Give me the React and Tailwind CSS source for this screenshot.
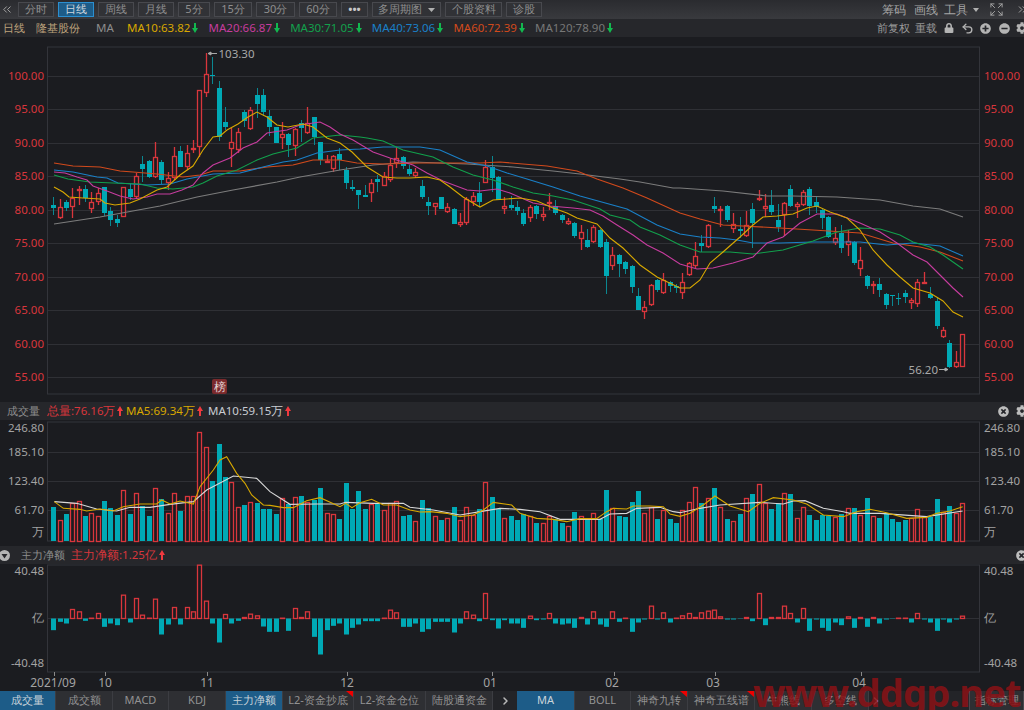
import { ChevronRight, ChevronsLeft, ChevronsRight, Expand, Undo2 } from 'lucide-react'
import { FaCog, FaLock, FaMinusCircle, FaPlusCircle, FaTimesCircle } from 'react-icons/fa'

const UP = '#d9363c'
const DOWN = '#00a9b5'
const GRID = '#2f3035'
const FRAME = '#33343a'
const AXIS = '#a3a3a3'

const barX = (i) => 53.3 + 6.354 * i

// [red?, high, bodyTop, bodyBottom, low] in page pixels, left to right
const candles = [
  [0,197,205,208,215],[1,199,207,218,219],[0,200,202,208,211],[1,188,198,207,218],[1,186,189,190,205],[0,185,189,198,202],
  [1,192,202,209,213],[1,188,193,202,205],[0,187,187,213,216],[0,207,211,220,226],[0,215,219,223,227],[1,187,187,217,217],
  [0,183,189,197,200],[1,173,176,197,198],[0,156,164,169,182],[0,160,161,177,178],[1,142,157,177,178],[0,160,162,180,184],
  [1,172,178,183,190],[1,147,156,178,180],[0,146,151,167,167],[1,145,153,167,170],[1,140,148,150,153],[1,90,90,147,157],
  [1,53,74,93,97],[0,57,75,76,84],[0,81,88,137,141],[0,107,122,127,130],[1,128,142,149,167],[1,128,132,150,153],
  [0,110,112,121,127],[1,107,110,129,130],[0,88,95,104,118],[0,89,95,112,116],[0,110,116,127,136],[0,127,127,143,143],
  [1,122,134,138,149],[0,133,134,145,157],[1,128,129,146,156],[0,120,123,128,142],[1,107,123,133,134],[0,117,117,137,145],
  [0,142,142,160,165],[1,155,161,162,163],[1,155,156,169,172],[0,148,154,160,170],[0,167,170,183,189],[0,180,187,189,191],
  [0,190,190,195,209],[0,185,195,197,197],[1,179,183,193,202],[0,175,179,182,192],[1,172,176,186,186],[1,158,165,180,182],
  [1,147,158,163,168],[0,156,157,166,169],[0,165,169,174,176],[1,168,172,176,178],[0,180,186,197,199],[0,197,202,206,215],
  [1,203,203,207,215],[0,197,197,209,209],[1,203,207,212,213],[0,208,209,224,224],[1,213,222,225,227],[1,197,199,223,225],
  [1,192,196,202,206],[0,182,193,202,207],[1,160,167,183,183],[0,156,167,178,192],[0,176,177,200,200],[1,197,206,209,214],
  [0,196,205,208,210],[0,201,207,211,215],[0,209,213,224,226],[1,205,207,218,222],[0,205,206,214,219],[1,207,214,217,221],
  [1,193,202,204,210],[0,200,206,213,215],[0,214,215,220,223],[1,218,221,224,225],[0,222,223,236,238],[1,225,232,239,250],
  [0,229,240,247,248],[1,225,227,242,243],[0,229,230,247,248],[0,239,242,276,294],[1,247,255,266,270],[0,254,255,264,277],
  [0,261,262,269,274],[0,265,266,287,293],[0,288,296,310,310],[1,301,307,312,319],[1,284,285,305,306],[0,279,280,290,292],
  [1,273,280,293,294],[0,281,282,286,292],[0,284,286,288,293],[1,273,282,293,299],[1,262,263,275,276],[1,242,256,266,268],
  [0,235,243,246,252],[1,224,225,247,248],[0,197,206,209,213],[1,206,209,210,227],[0,205,206,220,222],[1,213,224,229,233],
  [0,217,229,231,238],[1,211,225,236,237],[0,203,209,223,248],[1,190,198,199,201],[1,194,206,209,217],[0,190,205,212,215],
  [0,204,220,227,232],[1,202,203,215,236],[0,185,189,206,207],[1,202,204,207,218],[1,190,192,205,206],[0,187,189,206,215],
  [0,197,202,207,213],[0,209,210,218,229],[0,216,217,237,238],[1,227,238,243,245],[0,225,233,248,253],[1,230,241,245,256],
  [0,241,242,263,265],[1,247,260,269,276],[0,275,276,286,289],[1,281,284,286,294],[0,278,284,290,297],[0,293,294,305,309],
  [0,295,295,296,306],[0,293,298,299,305],[0,290,293,297,303],[1,298,300,303,309],[1,279,282,304,307],[1,272,282,283,284],
  [0,287,294,298,299],[0,297,301,326,329],[1,327,330,337,338],[0,340,343,367,368],[1,351,362,367,368],[1,334,334,367,367],
]

const ma10 = '54,187 63,192 69,197 83,198 100,199 105,203 115,205 130,203 140,199 157,190 167,187 180,175 193,166 203,150 213,137 220,136 227,130 238,124 248,117 257,112 267,117 277,125 288,127 303,124 313,127 327,138 340,143 352,152 367,167 383,177 397,178 410,178 427,177 440,180 450,187 463,197 473,203 480,207 493,200 507,199 520,198 537,201 553,208 567,213 577,218 597,224 610,238 623,248 640,265 657,277 680,288 690,288 700,280 710,263 723,252 740,237 753,225 763,217 777,216 793,214 807,208 817,206 830,212 847,218 860,230 873,250 887,265 900,277 913,288 930,293 943,301 953,312 963,317'
const ma20 = '54,172 65,173 77,177 87,180 93,186 107,191 120,196 133,199 147,197 157,194 170,194 182,190 193,185 203,173 213,165 230,158 243,148 257,142 267,133 287,130 300,125 320,122 330,127 340,134 353,140 373,152 390,158 413,165 427,173 443,181 467,190 480,191 497,189 510,193 533,203 550,206 573,208 590,210 603,216 617,225 633,235 647,245 663,253 680,264 697,269 713,268 733,263 753,257 767,243 783,237 800,223 817,214 837,214 860,223 880,232 897,243 913,255 927,262 943,278 953,288 963,297'
const ma30 = '54,175 68,179 90,182 113,183 140,184 157,188 173,189 193,187 203,183 217,176 237,170 257,160 273,154 297,148 313,138 340,135 360,137 367,138 383,141 403,150 433,157 453,167 473,175 493,180 513,187 533,193 553,196 573,200 600,209 610,215 630,220 640,227 660,235 680,245 700,252 730,252 753,254 783,250 813,241 837,232 860,228 880,229 900,235 913,242 930,247 943,255 963,269'
const ma40 = '54,170 73,172 97,177 107,178 118,183 147,185 170,184 187,179 213,174 240,173 263,167 283,162 297,160 317,153 340,150 360,149 383,147 420,147 440,150 467,162 487,166 507,173 527,179 553,187 580,196 627,209 657,225 680,234 700,237 720,238 737,240 753,243 780,243 813,242 860,242 887,245 913,243 940,246 963,256'
const ma60 = '54,163 73,166 100,167 120,171 133,172 157,174 183,177 200,175 213,171 240,171 267,167 293,165 313,160 340,160 357,163 383,164 420,163 453,163 480,163 500,162 547,166 577,171 597,179 623,188 647,198 680,213 700,219 723,225 780,228 813,230 860,233 893,243 920,247 940,252 963,261'
const ma120 = '54,224 100,217 160,206 197,197 233,190 277,182 300,177 340,170 373,165 413,162 467,164 513,167 553,171 580,174 620,179 640,182 673,188 680,188 723,191 767,196 793,196 837,197 880,200 913,206 940,209 963,217'

// bar tops, sampled at 3x from y=400
const volTops = [
  320,360,343,310,303,348,340,348,303,325,345,270,343,278,318,348,265,297,338,278,332,287,287,97,140,243,133,232,245,320,
  316,306,310,327,327,341,295,312,292,288,305,300,265,338,341,357,248,327,273,327,313,313,330,310,303,348,345,363,300,325,
  348,360,355,322,360,320,345,327,246,292,327,355,348,360,341,347,368,368,348,358,368,378,335,347,358,340,358,270,325,348,
  352,305,273,338,320,357,330,357,370,330,306,262,310,295,265,322,357,362,341,295,283,252,310,327,308,278,283,355,322,345,
  360,345,348,352,341,325,324,345,295,347,354,338,357,365,360,355,328,350,350,297,335,318,338,308,
]

const toXY = (pts, x0, y0) => pts.map(([x, z]) => `${x0 + x / 3},${y0 + z / 3}`).join(' ')
const volMa5 = [
  toXY([[163,305],[190,325],[240,328],[260,333],[300,327],[340,333],[370,320],[420,312],[470,312],[485,300],[510,312],[540,303],[580,312],[600,260],[640,210],[660,180],[680,170],[710,220],[735,250],[755,285],[790,315],[810,316],[850,323],[880,323],[920,302],[960,293],[1020,320]], 0, 400),
  toXY([[17,310],[36,323],[60,308],[95,298],[130,315],[170,315],[210,330],[240,336],[270,335],[320,340],[360,350],[400,345],[430,330],[460,307],[515,315],[540,340],[590,355],[640,358],[680,365],[720,356],[770,356],[800,335],[820,325],[860,327],[880,318],[930,318],[970,320],[990,342],[1020,349]], 340, 400),
  toXY([[30,340],[70,315],[105,288],[150,318],[205,335],[240,310],[280,293],[340,300],[380,312],[430,345],[490,350],[530,335],[570,328],[620,338],[680,355],[740,352],[770,340],[810,333],[848,320]], 680, 400),
].join(' ')
const volMa10 = [
  toXY([[163,305],[230,310],[290,327],[350,333],[390,322],[450,322],[510,313],[580,305],[620,270],[700,228],[770,235],[810,275],[870,313],[950,312],[1020,312]], 0, 400),
  toXY([[17,307],[100,310],[190,310],[210,322],[280,330],[360,345],[420,335],[480,325],[540,328],[600,335],[660,358],[780,358],[810,342],[860,340],[890,325],[960,322],[1000,335],[1020,338]], 340, 400),
  toXY([[60,325],[120,315],[240,307],[310,312],[340,303],[375,302],[430,325],[490,335],[510,340],[600,340],[740,350],[848,333]], 680, 400),
].join(' ')

// net inflow bars, thirds of a pixel from the zero line
const netFlow = [
  -35,-10,-15,27,20,-7,1,15,-25,-15,-20,70,-12,60,10,1,58,-48,-18,33,-18,33,20,160,52,-15,-72,12,-15,-7,
  3,13,8,-24,-40,-40,1,-37,30,3,20,-55,-108,-35,-22,-15,-48,-28,-18,-8,-8,-8,1,25,17,-25,-25,-15,-40,-32,
  -10,-10,-10,-42,-15,20,10,-8,75,-5,-30,-5,-15,-15,-28,7,-5,-3,15,-15,-18,-15,-28,3,-18,20,-18,-25,20,-10,
  1,-40,-12,-3,37,-3,17,-12,1,8,15,3,17,22,25,5,-3,-3,-1,3,-8,75,-20,3,3,37,15,-12,30,-37,
  -3,-28,-37,-12,-20,5,-28,3,-25,3,-15,-3,-1,1,1,-12,15,-3,-12,-37,-3,-12,-3,7,
]

const priceLabels = [
  ['100.00', 75.5], ['95.00', 109], ['90.00', 142.5], ['85.00', 176], ['80.00', 209.5],
  ['75.00', 243], ['70.00', 276.5], ['65.00', 310], ['60.00', 343.5], ['55.00', 376.5],
]
const volLabels = [['185.10', 451.5], ['123.40', 481], ['61.70', 510]]
const months = [['2021/09', 54, 53], ['10', 105, 105], ['11', 207, 207], ['12', 347, 347], ['01', 492, 490], ['02', 614, 612], ['03', 715, 713], ['04', 861, 859]]

const DownArrow = ({ color = '#12b84f' }) => (
  <svg width="6" height="10" viewBox="0 0 6 10" className="ml-[2px] shrink-0">
    <path d="M2 0h2v5h2L3 10 0 5h2z" fill={color} />
  </svg>
)

const UpArrow = () => (
  <svg width="6" height="10" viewBox="0 0 6 10" className="ml-[2px] shrink-0">
    <path d="M2 10h2V5h2L3 0 0 5h2z" fill="#ef3a3f" />
  </svg>
)

const Btn = ({ active, className, children }) => (
  <div
    className={`flex h-[15px] items-center justify-center border text-[11px] ${
      active ? 'border-[#2b8fd0] bg-[#1d5c88] text-[#cfd6dc]' : 'border-[#48494e] bg-[#313236] text-[#8f8f8f]'
    } ${className}`}
  >
    {children}
  </div>
)

const Tab = ({ active, flag, className, children }) => (
  <div
    className={`relative flex h-full items-center justify-center border-r border-[#3c3d42] text-[11px] ${
      active ? 'bg-[#1d5c88] text-[#c9d3da]' : 'bg-[#2e2f33] text-[#929292]'
    } ${className}`}
  >
    {children}
    {flag && <span className="absolute right-0 top-0 border-l-[7px] border-t-[6px] border-l-transparent border-t-[#f00000]" />}
  </div>
)

const MaItem = ({ color, children }) => (
  <div className={`flex w-[81.6px] shrink-0 items-center text-[11.5px] ${color}`}>
    {children}
    <DownArrow />
  </div>
)

const Frame = ({ top, bottom }) => (
  <rect x="47.5" y={top} width="932" height={bottom - top} fill="none" stroke={FRAME} />
)

const Gridline = ({ y }) => <line x1="48" x2="979" y1={y} y2={y} stroke={GRID} />

const MaLine = ({ points, color }) => <polyline points={points} fill="none" stroke={color} strokeWidth="1.1" />

const Candle = ({ data, i }) => {
  const [red, high, top, bottom, low] = data
  const x = Math.round(barX(i)) + 0.5
  if (red) {
    return (
      <g stroke={UP} strokeWidth="1.3">
        <line x1={x} x2={x} y1={high} y2={top} />
        <line x1={x} x2={x} y1={bottom} y2={low} />
        <rect x={x - 2} y={top + 0.5} width="4" height={Math.max(bottom - top - 1, 1)} fill="#1b1c20" />
      </g>
    )
  }
  return (
    <g>
      <line x1={x} x2={x} y1={high} y2={low} stroke="#0b8791" />
      <rect x={x - 2.5} y={top} width="5" height={Math.max(bottom - top, 1)} fill={DOWN} />
    </g>
  )
}

const AxisText = ({ x, y, anchor = 'start', fill = AXIS, children }) => (
  <text x={x} y={y} dy="4" textAnchor={anchor} fontSize="11.5" fill={fill}>
    {children}
  </text>
)

const PriceChart = () => (
  <svg className="block h-[365px] w-[1024px] shrink-0" viewBox="0 37 1024 365">
    <Frame top={47} bottom={394} />
    {priceLabels.map(([label, y]) => (
      <g key={label}>
        <Gridline y={Math.round(y) + 0.5} />
        <AxisText x="44" y={y} anchor="end" fill="#d8363c">{label}</AxisText>
        <AxisText x="984" y={y} fill="#d8363c">{label}</AxisText>
      </g>
    ))}
    {candles.map((c, i) => <Candle key={i} data={c} i={i} />)}
    <MaLine points={ma120} color="#7c7c7c" />
    <MaLine points={ma60} color="#d24a1c" />
    <MaLine points={ma40} color="#1a80c8" />
    <MaLine points={ma30} color="#12a04c" />
    <MaLine points={ma20} color="#c63c9e" />
    <MaLine points={ma10} color="#d8a800" />
    <path d="M208 53.5h9M208 53.5l3-1.5v3z" stroke="#a8a8a8" fill="#a8a8a8" />
    <AxisText x="218.5" y="53.5" fill="#a8a8a8">103.30</AxisText>
    <path d="M939 369.5h9M948 369.5l-3-1.5v3z" stroke="#a8a8a8" fill="#a8a8a8" />
    <AxisText x="938" y="369.5" anchor="end" fill="#a8a8a8">56.20</AxisText>
    <rect x="212" y="379" width="15" height="15" rx="2" fill="#7b2a2c" />
    <text x="219.5" y="390.5" textAnchor="middle" fontSize="12" fill="#e2d4d4">榜</text>
  </svg>
)

const VolumeChart = () => (
  <svg className="block h-[126px] w-[1024px] shrink-0" viewBox="0 420 1024 126">
    <Frame top={422} bottom={541} />
    <AxisText x="44" y="428" anchor="end">246.80</AxisText>
    <AxisText x="984" y="428">246.80</AxisText>
    {volLabels.map(([label, y]) => (
      <g key={label}>
        <Gridline y={Math.round(y) + 0.5} />
        <AxisText x="44" y={y} anchor="end">{label}</AxisText>
        <AxisText x="984" y={y}>{label}</AxisText>
      </g>
    ))}
    <AxisText x="44" y="532" anchor="end">万</AxisText>
    <AxisText x="984" y="532">万</AxisText>
    {volTops.map((z, i) => {
      const x = Math.round(barX(i))
      const top = Math.round(400 + z / 3)
      return candles[i][0] ? (
        <rect key={i} x={x - 1.5} y={top + 0.5} width="4" height={541 - top} fill="#1b1c20" stroke={UP} strokeWidth="1.3" />
      ) : (
        <rect key={i} x={x - 2} y={top} width="5" height={541 - top} fill={DOWN} />
      )
    })}
    <MaLine points={volMa10} color="#d8d8d8" />
    <MaLine points={volMa5} color="#d8a800" />
  </svg>
)

const FlowChart = () => (
  <svg className="block h-[127px] w-[1024px] shrink-0" viewBox="0 564 1024 127">
    <Frame top={565} bottom={672} />
    <Gridline y={618.5} />
    <AxisText x="44" y="571" anchor="end">40.48</AxisText>
    <AxisText x="984" y="571">40.48</AxisText>
    <AxisText x="44" y="618" anchor="end">亿</AxisText>
    <AxisText x="984" y="618">亿</AxisText>
    <AxisText x="44" y="663" anchor="end">-40.48</AxisText>
    <AxisText x="984" y="663">-40.48</AxisText>
    {netFlow.map((v, i) => {
      const x = Math.round(barX(i))
      const h = Math.abs(v) / 3
      return v > 0 ? (
        <rect key={i} x={x - 1.5} y={618.5 - h} width="4" height={h} fill="#1b1c20" stroke={UP} strokeWidth="1.3" />
      ) : (
        <rect key={i} x={x - 2} y={618.5} width="5" height={h} fill={DOWN} />
      )
    })}
    {months.map(([label, tick, text]) => (
      <g key={label}>
        <line x1={tick + 0.5} x2={tick + 0.5} y1="672" y2="676" stroke="#8a8a8a" />
        <text x={text} y="687" textAnchor="middle" fontSize="12" fill={AXIS}>{label}</text>
      </g>
    ))}
  </svg>
)

const App = () => {
  return (
    <div className="relative flex h-[710px] w-[1024px] flex-col overflow-hidden bg-[#1b1c20] font-['Liberation_Sans','Noto_Sans_CJK_SC',sans-serif]">
      {/* Period toolbar */}
      <div className="flex h-[19px] shrink-0 items-center gap-[4px] bg-gradient-to-b from-[#2a2b2f] to-[#393a3e]">
        <ChevronsLeft size={13} strokeWidth={1.8} className="w-[14px] text-[#a5a5a5]" />
        <Btn className="w-[36px]">分时</Btn>
        <Btn active className="w-[36px]">日线</Btn>
        <Btn className="w-[36px]">周线</Btn>
        <Btn className="w-[36px]">月线</Btn>
        <Btn className="w-[32px]">5分</Btn>
        <Btn className="w-[38px]">15分</Btn>
        <Btn className="w-[39px]">30分</Btn>
        <Btn className="w-[38px]">60分</Btn>
        <Btn className="w-[27px] font-bold text-[#c8c8c8]">•••</Btn>
        <Btn className="w-[69px] gap-[6px]">
          多周期图
          <svg width="7" height="4" viewBox="0 0 7 4"><path d="M0 0h7L3.500 4z" fill="#b0b0b0" /></svg>
        </Btn>
        <Btn className="w-[57px]">个股资料</Btn>
        <Btn className="w-[36px]">诊股</Btn>
        <div className="ml-auto flex items-center text-[12px] text-[#a5a5a5]">
          <span className="mr-[8px]">筹码</span>
          <span className="mr-[6px]">画线</span>
          <span>工具</span>
          <svg width="6" height="4" viewBox="0 0 6 4" className="ml-[5px]"><path d="M0 0h6L3 4z" fill="#b0b0b0" /></svg>
          <Expand size={15} strokeWidth={1.5} className="ml-[10px] text-[#a5a5a5]" />
          <ChevronsRight size={13} strokeWidth={1.8} className="ml-[12px] mr-[-5px] text-[#a5a5a5]" />
        </div>
      </div>

      {/* Indicator legend */}
      <div className="flex h-[18px] shrink-0 items-center bg-[#26272b] pl-[3px]">
        <span className="w-[33px] text-[11px] text-[#bda27c]">日线</span>
        <span className="w-[60px] text-[11px] text-[#bda27c]">隆基股份</span>
        <span className="w-[31px] text-[11.5px] text-[#8d8d8d]">MA</span>
        <MaItem color="text-[#d8a800]">MA10:63.82</MaItem>
        <MaItem color="text-[#c63c9e]">MA20:66.87</MaItem>
        <MaItem color="text-[#12a04c]">MA30:71.05</MaItem>
        <MaItem color="text-[#1a80c8]">MA40:73.06</MaItem>
        <MaItem color="text-[#d24a1c]">MA60:72.39</MaItem>
        <MaItem color="text-[#777777]">MA120:78.90</MaItem>
        <div className="ml-auto flex items-center text-[11px] text-[#9a9a9a]">
          <span className="mr-[5px]">前复权</span>
          <span>重载</span>
          <FaLock size={10} className="ml-[7px] text-[#b4b4b4]" />
          <Undo2 size={13} strokeWidth={2.5} className="ml-[7px] text-[#b4b4b4]" />
          <FaPlusCircle size={11} className="ml-[6px] text-[#b4b4b4]" />
          <FaMinusCircle size={11} className="ml-[8px] text-[#b4b4b4]" />
          <FaCog size={12} className="ml-[6px] mr-[-4px] text-[#b4b4b4]" />
        </div>
      </div>

      <PriceChart />

      {/* Volume panel */}
      <div className="flex h-[18px] shrink-0 items-center bg-[#26272b] pl-[7px] text-[11px]">
        <span className="w-[40px] text-[#8f8f8f]">成交量</span>
        <span className="flex w-[79px] items-center text-[11.5px] text-[#d9363c]">总量:76.16万<UpArrow /></span>
        <span className="flex w-[82px] items-center text-[11.5px] text-[#d8a800]">MA5:69.34万<UpArrow /></span>
        <span className="flex items-center text-[11.5px] text-[#c9ccd2]">MA10:59.15万<UpArrow /></span>
        <FaTimesCircle size={11} className="ml-auto text-[#bdbdbd]" />
        <FaCog size={12} className="ml-[7px] mr-[-4px] text-[#bdbdbd]" />
      </div>
      <VolumeChart />

      {/* Net inflow panel */}
      <div className="flex h-[18px] shrink-0 items-center bg-[#26272b] text-[11px]">
        <svg width="11" height="11" viewBox="0 0 11 11" className="mr-[11px] ml-[-1px]">
          <circle cx="5.500" cy="5.500" r="5.500" fill="#b4b4b4" />
          <path d="M2.500 4h6l-3 4.500z" fill="#26272b" />
        </svg>
        <span className="w-[50px] text-[#8f8f8f]">主力净额</span>
        <span className="flex items-center text-[11.5px] text-[#d9363c]">主力净额:1.25亿<UpArrow /></span>
        <FaTimesCircle size={11} className="ml-auto mr-[-3px] text-[#bdbdbd]" />
      </div>
      <FlowChart />

      {/* Indicator tabs */}
      <div className="flex h-[19px] shrink-0 items-center bg-[#232428]">
        <Tab active className="w-[56px]">成交量</Tab>
        <Tab className="w-[57px]">成交额</Tab>
        <Tab className="w-[56px]">MACD</Tab>
        <Tab className="w-[57px]">KDJ</Tab>
        <Tab active className="w-[57px]">主力净额</Tab>
        <Tab flag className="w-[71px]">L2-资金抄底</Tab>
        <Tab className="w-[72px]">L2-资金仓位</Tab>
        <Tab className="w-[67px]">陆股通资金</Tab>
        <ChevronRight size={12} strokeWidth={3} className="ml-[1px] w-[23px] text-[#b8b8b8]" />
        <Tab active className="w-[58px]">MA</Tab>
        <Tab className="w-[56px]">BOLL</Tab>
        <Tab flag className="w-[57px]">神奇九转</Tab>
        <Tab flag className="w-[67px]">神奇五线谱</Tab>
        <Tab className="w-[57px]">牛熊线</Tab>
        <Tab className="w-[57px]">多空线</Tab>
        <ChevronRight size={12} strokeWidth={3} className="ml-[1px] text-[#b8b8b8]" />
        <Tab className="ml-auto w-[55px] border-l border-[#48494e]">指标管理</Tab>
      </div>

      {/* Site watermark */}
      <div className="absolute bottom-[-2px] left-[753px] whitespace-nowrap text-[38px] font-bold leading-[39px] tracking-[-0.8px] text-[#8a1216] opacity-85">
        www.ddgp.net
      </div>
    </div>
  )
}

export default App
